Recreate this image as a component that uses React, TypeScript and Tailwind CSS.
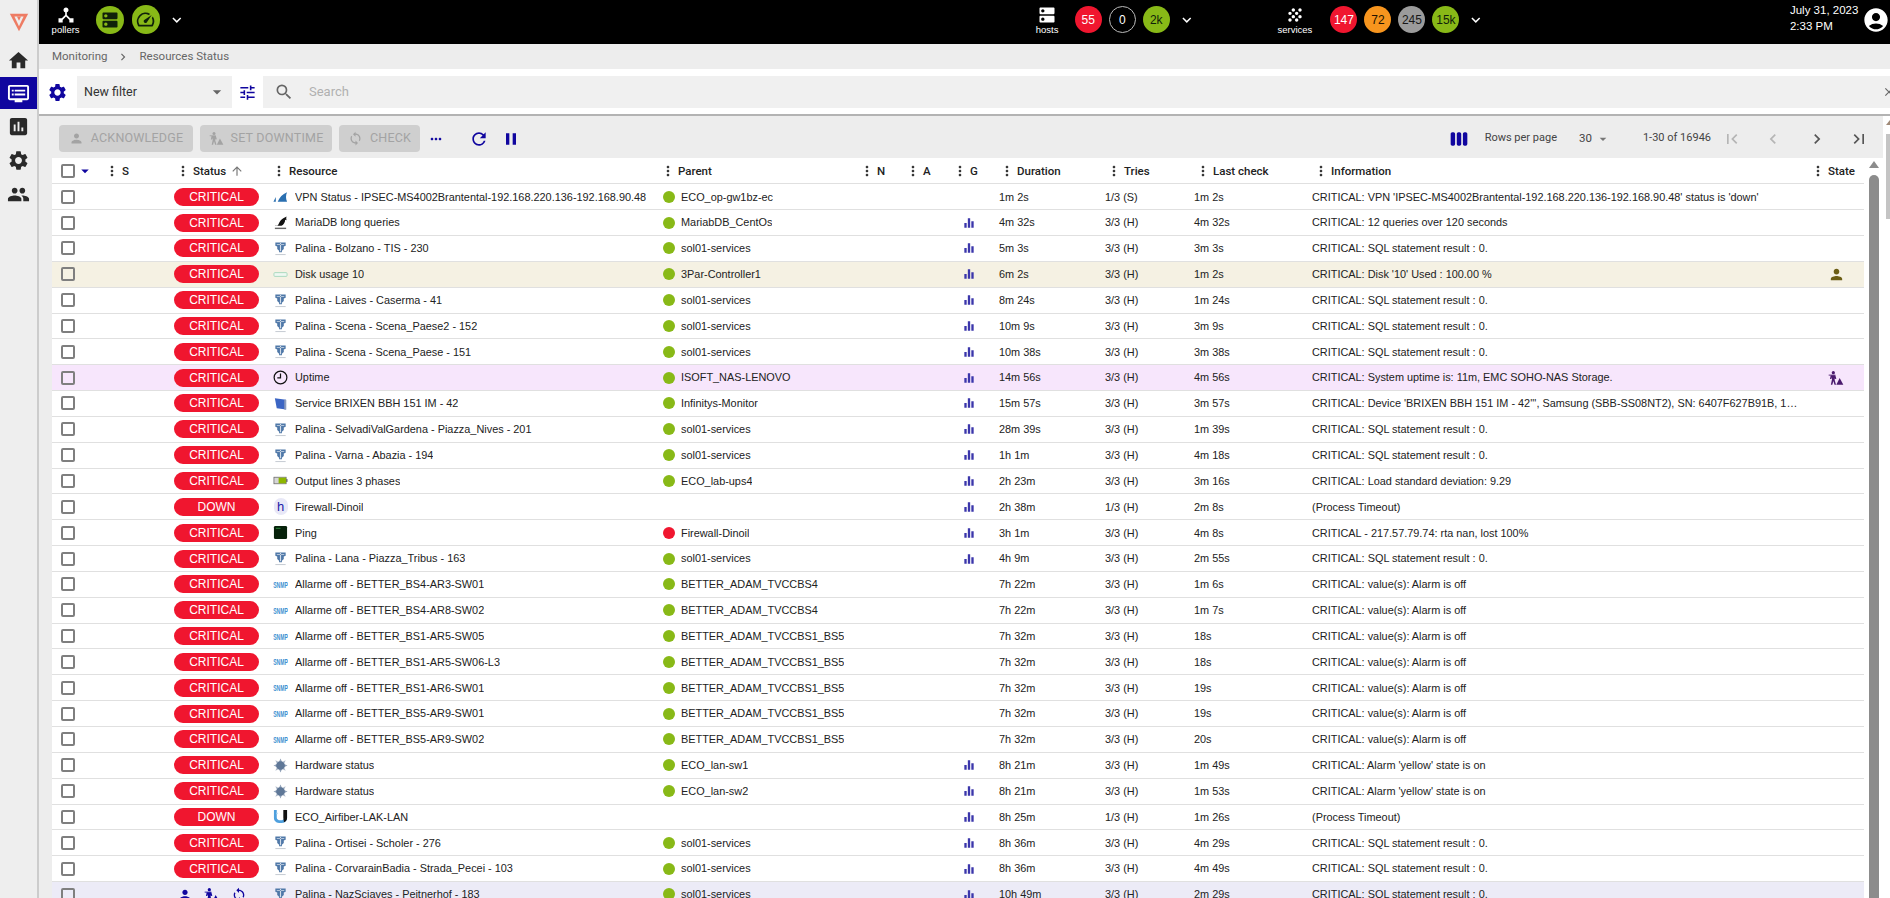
import React from "react";
import {
  MdHome,
  MdDvr,
  MdAssessment,
  MdSettings,
  MdPeople,
  MdDeviceHub,
  MdDns,
  MdSpeed,
  MdGrain,
  MdKeyboardArrowDown,
  MdAccountCircle,
  MdArrowDropDown,
  MdTune,
  MdSearch,
  MdClose,
  MdPerson,
  MdSync,
  MdMoreHoriz,
  MdRefresh,
  MdPause,
  MdViewWeek,
  MdFirstPage,
  MdLastPage,
  MdChevronLeft,
  MdChevronRight,
  MdMoreVert,
  MdArrowUpward,
  MdEqualizer,
} from "react-icons/md";

const gridCols =
  "grid grid-cols-[52px_62px_99px_390px_203px_46px_46px_42px_106px_89px_118px_505px_54px]";

const sql = "CRITICAL: SQL statement result : 0.";
const alarm = "CRITICAL: value(s): Alarm is off";
const yellow = "CRITICAL: Alarm 'yellow' state is on";

type Row = {
  icon: string;
  name: string;
  parent?: string;
  red?: boolean;
  graph?: boolean;
  duration: string;
  tries: string;
  last: string;
  info: string;
  down?: boolean;
  state?: "ack" | "downtime" | "hover";
};

const rows: Row[] = [
  { icon: "vpn", name: "VPN Status - IPSEC-MS4002Brantental-192.168.220.136-192.168.90.48", parent: "ECO_op-gw1bz-ec", duration: "1m 2s", tries: "1/3 (S)", last: "1m 2s", info: "CRITICAL: VPN 'IPSEC-MS4002Brantental-192.168.220.136-192.168.90.48' status is 'down'" },
  { icon: "maria", name: "MariaDB long queries", parent: "MariabDB_CentOs", graph: true, duration: "4m 32s", tries: "3/3 (H)", last: "4m 32s", info: "CRITICAL: 12 queries over 120 seconds" },
  { icon: "palina", name: "Palina - Bolzano - TIS - 230", parent: "sol01-services", graph: true, duration: "5m 3s", tries: "3/3 (H)", last: "3m 3s", info: sql },
  { icon: "disk", name: "Disk usage 10", parent: "3Par-Controller1", graph: true, duration: "6m 2s", tries: "3/3 (H)", last: "1m 2s", info: "CRITICAL: Disk '10' Used : 100.00 %", state: "ack" },
  { icon: "palina", name: "Palina - Laives - Caserma - 41", parent: "sol01-services", graph: true, duration: "8m 24s", tries: "3/3 (H)", last: "1m 24s", info: sql },
  { icon: "palina", name: "Palina - Scena - Scena_Paese2 - 152", parent: "sol01-services", graph: true, duration: "10m 9s", tries: "3/3 (H)", last: "3m 9s", info: sql },
  { icon: "palina", name: "Palina - Scena - Scena_Paese - 151", parent: "sol01-services", graph: true, duration: "10m 38s", tries: "3/3 (H)", last: "3m 38s", info: sql },
  { icon: "clock", name: "Uptime", parent: "ISOFT_NAS-LENOVO", graph: true, duration: "14m 56s", tries: "3/3 (H)", last: "4m 56s", info: "CRITICAL: System uptime is: 11m, EMC SOHO-NAS Storage.", state: "downtime" },
  { icon: "screen", name: "Service BRIXEN BBH 151 IM - 42", parent: "Infinitys-Monitor", graph: true, duration: "15m 57s", tries: "3/3 (H)", last: "3m 57s", info: "CRITICAL: Device 'BRIXEN BBH 151 IM - 42''', Samsung (SBB-SS08NT2), SN: 6407F627B91B, 1…" },
  { icon: "palina", name: "Palina - SelvadiValGardena - Piazza_Nives - 201", parent: "sol01-services", graph: true, duration: "28m 39s", tries: "3/3 (H)", last: "1m 39s", info: sql },
  { icon: "palina", name: "Palina - Varna - Abazia - 194", parent: "sol01-services", graph: true, duration: "1h 1m", tries: "3/3 (H)", last: "4m 18s", info: sql },
  { icon: "ups", name: "Output lines 3 phases", parent: "ECO_lab-ups4", graph: true, duration: "2h 23m", tries: "3/3 (H)", last: "3m 16s", info: "CRITICAL: Load standard deviation: 9.29" },
  { icon: "host", name: "Firewall-Dinoil", graph: true, duration: "2h 38m", tries: "1/3 (H)", last: "2m 8s", info: "(Process Timeout)", down: true },
  { icon: "ping", name: "Ping", parent: "Firewall-Dinoil", red: true, graph: true, duration: "3h 1m", tries: "3/3 (H)", last: "4m 8s", info: "CRITICAL - 217.57.79.74: rta nan, lost 100%" },
  { icon: "palina", name: "Palina - Lana - Piazza_Tribus - 163", parent: "sol01-services", graph: true, duration: "4h 9m", tries: "3/3 (H)", last: "2m 55s", info: sql },
  { icon: "snmp", name: "Allarme off - BETTER_BS4-AR3-SW01", parent: "BETTER_ADAM_TVCCBS4", duration: "7h 22m", tries: "3/3 (H)", last: "1m 6s", info: alarm },
  { icon: "snmp", name: "Allarme off - BETTER_BS4-AR8-SW02", parent: "BETTER_ADAM_TVCCBS4", duration: "7h 22m", tries: "3/3 (H)", last: "1m 7s", info: alarm },
  { icon: "snmp", name: "Allarme off - BETTER_BS1-AR5-SW05", parent: "BETTER_ADAM_TVCCBS1_BS5", duration: "7h 32m", tries: "3/3 (H)", last: "18s", info: alarm },
  { icon: "snmp", name: "Allarme off - BETTER_BS1-AR5-SW06-L3", parent: "BETTER_ADAM_TVCCBS1_BS5", duration: "7h 32m", tries: "3/3 (H)", last: "18s", info: alarm },
  { icon: "snmp", name: "Allarme off - BETTER_BS1-AR6-SW01", parent: "BETTER_ADAM_TVCCBS1_BS5", duration: "7h 32m", tries: "3/3 (H)", last: "19s", info: alarm },
  { icon: "snmp", name: "Allarme off - BETTER_BS5-AR9-SW01", parent: "BETTER_ADAM_TVCCBS1_BS5", duration: "7h 32m", tries: "3/3 (H)", last: "19s", info: alarm },
  { icon: "snmp", name: "Allarme off - BETTER_BS5-AR9-SW02", parent: "BETTER_ADAM_TVCCBS1_BS5", duration: "7h 32m", tries: "3/3 (H)", last: "20s", info: alarm },
  { icon: "hw", name: "Hardware status", parent: "ECO_lan-sw1", graph: true, duration: "8h 21m", tries: "3/3 (H)", last: "1m 49s", info: yellow },
  { icon: "hw", name: "Hardware status", parent: "ECO_lan-sw2", graph: true, duration: "8h 21m", tries: "3/3 (H)", last: "1m 53s", info: yellow },
  { icon: "ubnt", name: "ECO_Airfiber-LAK-LAN", graph: true, duration: "8h 25m", tries: "1/3 (H)", last: "1m 26s", info: "(Process Timeout)", down: true },
  { icon: "palina", name: "Palina - Ortisei - Scholer - 276", parent: "sol01-services", graph: true, duration: "8h 36m", tries: "3/3 (H)", last: "4m 29s", info: sql },
  { icon: "palina", name: "Palina - CorvarainBadia - Strada_Pecei - 103", parent: "sol01-services", graph: true, duration: "8h 36m", tries: "3/3 (H)", last: "4m 49s", info: sql },
  { icon: "palina", name: "Palina - NazSciaves - Peitnerhof - 183", parent: "sol01-services", graph: true, duration: "10h 49m", tries: "3/3 (H)", last: "2m 29s", info: sql, state: "hover" },
];

const DowntimeIcon = ({ className }: { className?: string }) => (
  <svg viewBox="0 0 24 24" className={className} fill="currentColor">
    <circle cx="8" cy="4" r="2.4" />
    <path d="M4 8h7l1.500 5-2 .6L10 12v3l2 7H9.800L8 16.500 6.500 22H4.300L6 14v-3l-1 2.500H3z" />
    <path d="M1 7h10v1.300H1z" />
    <path d="M17.500 12 23 22H12.500z" />
  </svg>
);

const ServiceIcon = ({ type }: { type: string }) => {
  if (type === "host") {
    return (
      <span className="flex h-[17px] w-[14px] items-center justify-center rounded-full bg-[#e8e8f7] text-[13px] leading-none text-[#1a1aa8]">
        h
      </span>
    );
  }
  if (type === "clock") {
    return (
      <svg viewBox="0 0 16 16" className="h-[15px] w-[15px]" fill="none" stroke="#111" strokeWidth="1.3">
        <circle cx="8" cy="8" r="6.8" />
        <path d="M8 3.800V8.400H4.600" />
      </svg>
    );
  }
  return (
    <svg viewBox="0 0 16 16" className="h-[15px] w-[15px]">
      {type === "snmp" && (
        <text x="0.2" y="6.6" fontSize="5.4" fontWeight="700" fill="#3d8fd1" transform="scale(1 1.7)">
          SNMP
        </text>
      )}
      {type === "vpn" && (
        <g fill="#2a6fb0">
          <path d="M5 13.500C7 9 10 5.500 15 3.500c-1.500 3-1.500 7 0 10z" />
          <path d="M.5 13.500 3 8.500v5z" />
        </g>
      )}
      {type === "maria" && (
        <g fill="#111">
          <path d="M2 11.500c1.500.5 3 0 4-2 1-2.500 3-5 5-6l3.500-2c-.5 1.500-.5 2.500 0 4l-1.500-.5c0 3-2 5.500-4 6.500H2z" />
          <rect x="2" y="13.500" width="12" height="1.500" fill="#666" />
        </g>
      )}
      {type === "palina" && (
        <g>
          <path d="M2.500 1.500h11v3.500l-2 .8v2.700l-2 2v1.500h-3v-1.500l-2-2V5.800l-2-.8z" fill="#4f78a8" />
          <path d="M7.400 2v9h1.200V2zM4 3.500h8v.8H4z" fill="#ffffff" opacity="0.75" />
          <rect x="2.500" y="14" width="11" height="1" fill="#c2c8d0" />
        </g>
      )}
      {type === "disk" && <rect x="1" y="6" width="14" height="4" rx="1" fill="#eef8f2" stroke="#a6d9bd" />}
      {type === "screen" && (
        <g>
          <path d="M2 2.500 14 4v10.500L4 13z" fill="#3b65c4" />
          <path d="M14 4v10.500h-2V4z" fill="#8c9dbe" />
        </g>
      )}
      {type === "ups" && (
        <g>
          <rect x="1" y="4.500" width="13" height="7" fill="#d6d6d6" stroke="#666" strokeWidth="0.8" />
          <rect x="6" y="5" width="8" height="6" fill="#8db600" />
          <rect x="14" y="6.500" width="1.500" height="3" fill="#666" />
        </g>
      )}
      {type === "ping" && (
        <g>
          <rect x="1" y="1" width="14" height="14" rx="1.500" fill="#06210a" />
          <rect x="3" y="3" width="5" height="1" fill="#2f8f3f" />
        </g>
      )}
      {type === "hw" && (
        <g fill="#5f7898">
          <circle cx="8" cy="8" r="4.600" />
          <path d="M8 0.500 10 5H6zM8 15.500 6 11h4zM0.500 8 5 6v4zM15.500 8 11 10V6z" opacity="0.7" />
          <path d="m2.500 2.500 4.500 2L4.500 7zM13.500 2.500l-2 4.500L9 4.500zM2.500 13.500l2-4.500L7 11.500zM13.500 13.500 9 11.500 11.500 9z" opacity="0.5" />
        </g>
      )}
      {type === "ubnt" && (
        <g>
          <path d="M1 1h3v8c0 2 1.500 3 4 3s4-1 4-3V1h3v8.500C15 13 12 15 8 15s-7-2-7-5.500z" fill="#4ea0de" />
          <path d="M11 1h4v8.500c0 2.500-1.500 4-3.500 4.700C12 13 11 11 11 9z" fill="#111" />
          <rect x="3.500" y="4" width="1.500" height="1.500" fill="#a9d4f2" />
        </g>
      )}
    </svg>
  );
};

const Logo = () => (
  <svg viewBox="0 0 24 24" className="h-[20px] w-[20px]">
    <path d="M1 2h22L12 23z" fill="#ee7c64" />
    <path d="M6.500 5.500h11L12 17z" fill="#eeeeee" />
    <path d="M9.500 5.500h5L12 10.500z" fill="#ee7c64" />
  </svg>
);

const Checkbox = () => (
  <span className="block h-[14px] w-[14px] rounded-[2px] border-2 border-[#7f7f7f]" />
);

const Count = ({ value, className }: { value: string; className: string }) => (
  <span className={`flex h-[27px] w-[27px] items-center justify-center rounded-full text-[12px] ${className}`}>
    {value}
  </span>
);

const HeadCell = ({ label, arrow, pl }: { label: string; arrow?: boolean; pl: string }) => (
  <div className={`flex items-center ${pl}`}>
    <MdMoreVert className="-mx-[3px] h-[16px] w-[16px] text-[#333]" />
    <span className="ml-[5px] whitespace-nowrap">{label}</span>
    {arrow && <MdArrowUpward className="ml-[4px] h-[14px] w-[14px] text-[#777]" />}
  </div>
);

const ToolButton = ({ icon, label, className }: { icon: React.ReactNode; label: string; className: string }) => (
  <button className={`flex h-[27px] items-center justify-center gap-[7px] rounded-[4px] bg-[#cfcfcf] text-[12.5px] tracking-[0.2px] text-[#a3a3a3] ${className}`}>
    {icon}
    {label}
  </button>
);

const TableRow = ({ row }: { row: Row }) => {
  const bg =
    row.state === "ack"
      ? "bg-[#f5f1e3]"
      : row.state === "downtime"
        ? "bg-[#f7e6fc]"
        : row.state === "hover"
          ? "bg-[#ecebf7]"
          : "bg-white";
  return (
    <div className={`${gridCols} h-[25.85px] items-center border-b border-[#e0e0e0] text-[10.9px] text-[#222] ${bg}`}>
      <div className="pl-[9px]">
        <Checkbox />
      </div>
      <div />
      <div className="pl-[8px]">
        {row.state === "hover" ? (
          <div className="flex items-center gap-[11px] pl-[3px] text-[#10069f]">
            <MdPerson className="h-[16px] w-[16px]" />
            <DowntimeIcon className="h-[16px] w-[16px]" />
            <MdSync className="h-[16px] w-[16px]" />
          </div>
        ) : (
          <span className="flex h-[18px] w-[85px] items-center justify-center rounded-full bg-[#f0162f] text-[12px] leading-none text-white">
            {row.down ? "DOWN" : "CRITICAL"}
          </span>
        )}
      </div>
      <div className="flex min-w-0 items-center gap-[7px] pl-[8px]">
        <span className="flex w-[15px] shrink-0 justify-center">
          <ServiceIcon type={row.icon} />
        </span>
        <span className="truncate">{row.name}</span>
      </div>
      <div className="flex items-center gap-[6px] pl-[8px]">
        {row.parent && (
          <>
            <span className={`h-[12px] w-[12px] shrink-0 rounded-full ${row.red ? "bg-[#f0162f]" : "bg-[#88b917]"}`} />
            <span className="truncate">{row.parent}</span>
          </>
        )}
      </div>
      <div />
      <div />
      <div className="pl-[12px]">{row.graph && <MdEqualizer className="h-[14px] w-[14px] text-[#3b36ab]" />}</div>
      <div className="pl-[7px]">{row.duration}</div>
      <div className="pl-[7px]">{row.tries}</div>
      <div className="pl-[7px]">{row.last}</div>
      <div className="truncate pl-[7px]">{row.info}</div>
      <div className="pl-[18px]">
        {row.state === "ack" && <MdPerson className="h-[17px] w-[17px] text-[#6b5d14]" />}
        {row.state === "downtime" && <DowntimeIcon className="h-[16px] w-[16px] text-[#4b1a6e]" />}
      </div>
    </div>
  );
};

export default function App() {
  return (
    <div className="flex h-[898px] w-[1890px] overflow-hidden bg-white font-['Liberation_Sans',Arial,sans-serif]">
      <aside className="flex w-[39px] shrink-0 flex-col border-r-2 border-[#cccccc] bg-[#eeeeee]">
        <div className="flex h-[43px] items-center justify-center">
          <Logo />
        </div>
        <div className="flex h-[34px] items-center justify-center text-[#2a2a2a]">
          <MdHome className="h-[23px] w-[23px]" />
        </div>
        <div className="flex h-[32px] items-center justify-center bg-[#10069f] text-white">
          <MdDvr className="h-[23px] w-[23px]" />
        </div>
        <div className="flex h-[34px] items-center justify-center text-[#2a2a2a]">
          <MdAssessment className="h-[23px] w-[23px]" />
        </div>
        <div className="flex h-[34px] items-center justify-center text-[#2a2a2a]">
          <MdSettings className="h-[23px] w-[23px]" />
        </div>
        <div className="flex h-[34px] items-center justify-center text-[#2a2a2a]">
          <MdPeople className="h-[23px] w-[23px]" />
        </div>
      </aside>

      <main className="flex min-w-0 flex-1 flex-col">
        <header className="flex h-[44px] shrink-0 items-center bg-black pb-[5px] text-white">
          <div className="ml-[10px] flex w-[34px] flex-col items-center">
            <MdDeviceHub className="h-[20px] w-[20px]" />
            <span className="-mt-[1px] text-[9.5px] leading-[11px]">pollers</span>
          </div>
          <span className="ml-[14px] flex h-[28px] w-[28px] items-center justify-center rounded-full bg-[#88b917] text-[#10210a]">
            <MdDns className="h-[20px] w-[20px]" />
          </span>
          <span className="ml-[8px] flex h-[29px] w-[29px] items-center justify-center rounded-full bg-[#88b917] text-[#10210a]">
            <MdSpeed className="h-[21px] w-[21px]" />
          </span>
          <MdKeyboardArrowDown className="ml-[8px] h-[18px] w-[18px]" />

          <div className="ml-[847px] flex w-[30px] flex-col items-center">
            <MdDns className="h-[20px] w-[20px]" />
            <span className="-mt-[1px] text-[9.5px] leading-[11px]">hosts</span>
          </div>
          <div className="ml-[13px] flex items-center gap-[7px]">
            <Count value="55" className="bg-[#f0162f] text-white" />
            <Count value="0" className="border border-[#bbbbbb] text-white" />
            <Count value="2k" className="bg-[#88b917] text-[#10210a]" />
          </div>
          <MdKeyboardArrowDown className="ml-[8px] h-[18px] w-[18px]" />

          <div className="ml-[80px] flex w-[40px] flex-col items-center">
            <MdGrain className="h-[20px] w-[20px]" />
            <span className="-mt-[1px] text-[9.5px] leading-[11px]">services</span>
          </div>
          <div className="ml-[16px] flex items-center gap-[7px]">
            <Count value="147" className="bg-[#f0162f] text-white" />
            <Count value="72" className="bg-[#f7951e] text-[#231300]" />
            <Count value="245" className="bg-[#9b9b9b] text-[#181818]" />
            <Count value="15k" className="bg-[#88b917] text-[#10210a]" />
          </div>
          <MdKeyboardArrowDown className="ml-[8px] h-[18px] w-[18px]" />

          <div className="-mt-[4px] ml-[305px] flex w-[66px] shrink-0 flex-col text-[11.5px] leading-[16px]">
            <span className="whitespace-nowrap">July 31, 2023</span>
            <span className="whitespace-nowrap">2:33 PM</span>
          </div>
          <MdAccountCircle className="ml-[6px] h-[28px] w-[28px] shrink-0" />
        </header>

        <div className="flex h-[25px] shrink-0 items-center bg-[#ededed] pl-[13px] font-['Roboto',sans-serif] text-[11.5px] text-[#666]">
          <span>Monitoring</span>
          <MdChevronRight className="ml-[9px] h-[14px] w-[14px]" />
          <span className="ml-[9px]">Resources Status</span>
        </div>

        <div className="flex h-[47px] shrink-0 items-center border-b-2 border-[#b3b3b3] bg-white pt-[1px]">
          <MdSettings className="ml-[8px] h-[21px] w-[21px] text-[#10069f]" />
          <div className="ml-[9px] flex h-[32px] w-[155px] items-center justify-between bg-[#f0f0f0] pl-[7px] pr-[5px] font-['Roboto',sans-serif] text-[12.5px] text-[#333]">
            New filter
            <MdArrowDropDown className="h-[20px] w-[20px] text-[#666]" />
          </div>
          <MdTune className="ml-[6px] h-[19px] w-[19px] text-[#10069f]" />
          <div className="ml-[6px] flex h-[32px] min-w-0 flex-1 items-center bg-[#f0f0f0] pl-[11px] font-['Roboto',sans-serif] text-[13px] text-[#b0b0b0]">
            <MdSearch className="h-[20px] w-[20px] text-[#666]" />
            <span className="ml-[15px]">Search</span>
            <MdClose className="ml-auto -mr-[6px] h-[14px] w-[14px] text-[#666]" />
          </div>
        </div>

        <div className="flex min-h-0 flex-1">
          <div className="flex min-w-0 flex-1 flex-col">
            <div className="flex h-[42px] shrink-0 items-center bg-[#ededed] pl-[20px] pr-[14px] pt-[3px] font-['Roboto',sans-serif]">
              <ToolButton
                className="w-[134px]"
                icon={<MdPerson className="h-[15px] w-[15px]" />}
                label="ACKNOWLEDGE"
              />
              <ToolButton
                className="ml-[7px] w-[132px]"
                icon={<DowntimeIcon className="h-[15px] w-[15px]" />}
                label="SET DOWNTIME"
              />
              <ToolButton
                className="ml-[7px] w-[81px]"
                icon={<MdSync className="h-[15px] w-[15px]" />}
                label="CHECK"
              />
              <MdMoreHoriz className="ml-[8px] h-[16px] w-[16px] text-[#10069f]" />
              <MdRefresh className="ml-[25px] h-[20px] w-[20px] text-[#10069f]" />
              <MdPause className="ml-[12px] h-[20px] w-[20px] text-[#10069f]" />
              <MdViewWeek className="ml-auto h-[20px] w-[20px] text-[#10069f]" />
              <span className="ml-[16px] text-[11px] text-[#444]">Rows per page</span>
              <span className="ml-[22px] text-[11.5px] text-[#444]">30</span>
              <MdArrowDropDown className="ml-[3px] h-[16px] w-[16px] text-[#777]" />
              <span className="ml-[32px] text-[11px] text-[#444]">1-30 of 16946</span>
              <MdFirstPage className="ml-[11px] h-[20px] w-[20px] text-[#b5b5b5]" />
              <MdChevronLeft className="ml-[21px] h-[20px] w-[20px] text-[#b5b5b5]" />
              <MdChevronRight className="ml-[24px] h-[20px] w-[20px] text-[#555]" />
              <MdLastPage className="ml-[22px] h-[20px] w-[20px] text-[#555]" />
            </div>

            <div className="flex min-h-0 flex-1 bg-[#ededed] pl-[13px]">
              <div className="w-[1812px] shrink-0 bg-white">
                <div className={`${gridCols} h-[26.3px] items-center border-b border-[#e0e0e0] pt-[1px] font-['Roboto',sans-serif] text-[11.5px] font-medium text-[#222]`}>
                  <div className="flex items-center pl-[9px]">
                    <Checkbox />
                    <MdArrowDropDown className="ml-[1px] h-[18px] w-[18px] text-[#10069f]" />
                  </div>
                  <HeadCell label="S" pl="pl-[3px]" />
                  <HeadCell label="Status" arrow pl="pl-[12px]" />
                  <HeadCell label="Resource" pl="pl-[9px]" />
                  <HeadCell label="Parent" pl="pl-[8px]" />
                  <HeadCell label="N" pl="pl-[4px]" />
                  <HeadCell label="A" pl="pl-[4px]" />
                  <HeadCell label="G" pl="pl-[5px]" />
                  <HeadCell label="Duration" pl="pl-[10px]" />
                  <HeadCell label="Tries" pl="pl-[11px]" />
                  <HeadCell label="Last check" pl="pl-[11px]" />
                  <HeadCell label="Information" pl="pl-[11px]" />
                  <HeadCell label="State" pl="pl-[3px]" />
                </div>
                {rows.map((row, i) => (
                  <TableRow key={i} row={row} />
                ))}
              </div>
              <div className="flex flex-1 flex-col items-start bg-white pl-[5px] pt-[3px]">
                <span className="h-0 w-0 border-x-[5px] border-b-[7px] border-x-transparent border-b-[#8c8c8c]" />
                <span className="mt-[7px] h-full w-[10px] rounded-t-[5px] bg-[#8c8c8c]" />
              </div>
            </div>
          </div>
          <div className="flex w-[7px] shrink-0 flex-col items-start bg-white pl-[3px] pt-[4px]">
            <span className="h-0 w-0 border-x-[4px] border-b-[5px] border-x-transparent border-b-[#a08a78]" />
            <span className="mt-[9px] h-[85px] w-[4px] bg-[#c4c4c4]" />
          </div>
        </div>
      </main>
    </div>
  );
}
